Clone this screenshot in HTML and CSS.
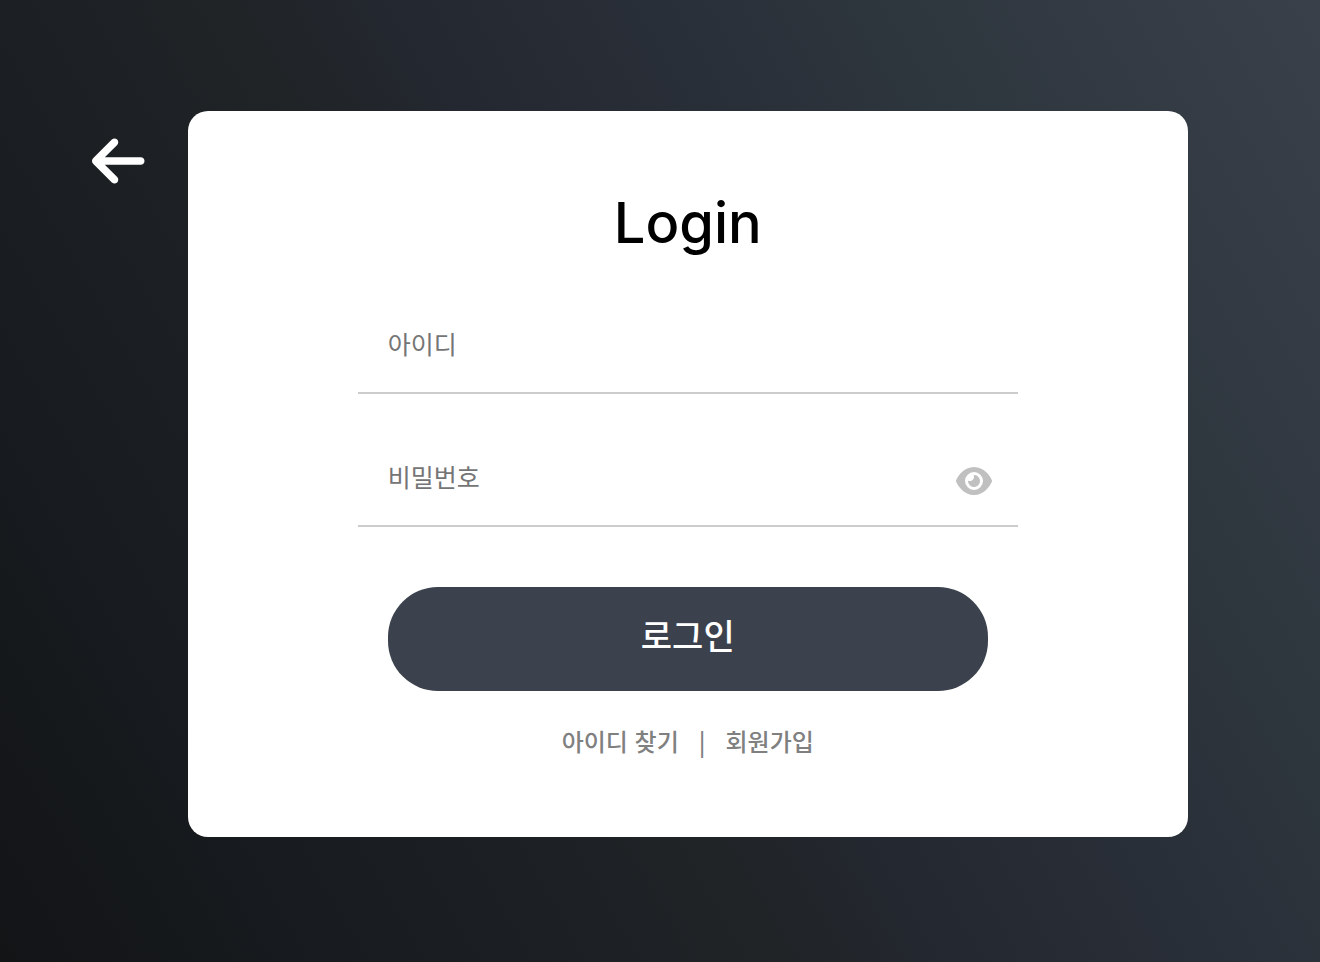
FILE: index.html
```html
<!DOCTYPE html>
<html lang="ko">
<head>
    <meta charset="UTF-8">
    <meta name="viewport" content="width=device-width, initial-scale=1.0">
    <title>Login</title>
    <link rel="stylesheet" href="styles.css">
</head>
<body>

    <div class="page">
        <!-- Back button -->
        <a href="#" class="back-link" aria-label="뒤로 가기">
            <svg class="back-icon" viewBox="0 0 448 512" aria-hidden="true">
                <path d="M9.4 233.4c-12.5 12.5-12.5 32.8 0 45.3l160 160c12.5 12.5 32.8 12.5 45.3 0s12.5-32.8 0-45.3L109.2 288 416 288c17.7 0 32-14.3 32-32s-14.3-32-32-32l-306.7 0L214.6 118.6c12.5-12.5 12.5-32.8 0-45.3s-32.8-12.5-45.3 0l-160 160z"/>
            </svg>
        </a>

        <!-- Login card -->
        <main class="login-container">
            <h1>Login</h1>
            <form class="login-form">
                <div class="input-box">
                    <input type="text" id="userId" placeholder="아이디" aria-label="아이디" required>
                </div>
                <div class="input-box">
                    <input type="password" id="userPw" placeholder="비밀번호" aria-label="비밀번호" required>
                    <button type="button" class="eye-button" aria-label="비밀번호 보기" onclick="togglePassword()">
                        <svg class="eye-icon" viewBox="0 0 576 512" aria-hidden="true">
                            <path d="M288 32c-80.8 0-145.5 36.8-192.6 80.6C48.6 156 17.3 208 2.5 243.7c-3.3 7.9-3.3 16.7 0 24.6C17.3 304 48.6 356 95.4 399.4C142.5 443.2 207.2 480 288 480s145.5-36.8 192.6-80.6c46.8-43.5 78.1-95.4 93-131.1c3.3-7.9 3.3-16.7 0-24.6c-14.9-35.7-46.2-87.7-93-131.1C433.5 68.8 368.8 32 288 32zM144 256a144 144 0 1 1 288 0 144 144 0 1 1 -288 0zm144-64c0 35.3-28.7 64-64 64c-7.1 0-13.9-1.2-20.3-3.3c-5.5-1.8-11.9 1.6-11.7 7.4c.3 6.9 1.3 13.8 3.2 20.7c13.7 51.2 66.4 81.6 117.6 67.9s81.6-66.4 67.9-117.6c-11.1-41.5-47.8-69.4-88.6-71.1c-5.8-.2-9.2 6.1-7.4 11.7c2.1 6.4 3.3 13.2 3.3 20.3z"/>
                        </svg>
                    </button>
                </div>
                <button type="submit" class="login-button">로그인</button>
            </form>
            <div class="links">
                <a href="#">아이디 찾기</a>
                <span>|</span>
                <a href="#">회원가입</a>
            </div>
        </main>
    </div>

    <script>
        function togglePassword() {
            const input = document.getElementById('userPw');
            input.type = input.type === 'password' ? 'text' : 'password';
        }
    </script>
</body>
</html>
```
FILE: styles.css
```css
* {
    box-sizing: border-box;
}

body {
    margin: 0;
    font-family: "Noto Sans CJK KR", sans-serif;
    background: linear-gradient(60deg, #121416, #191d21 22%, #202427 42%, #242831 52%, #2d353d 76%, #394049);
}

.page {
    min-height: 100vh;
    display: flex;
    justify-content: center;
    align-items: flex-start;
    gap: 43px;
    padding: 111px 132px 111px 92px;
}

.back-link {
    margin-top: 20px;
}

.back-icon {
    display: block;
    height: 60px;
    fill: white;
}

.login-container {
    flex: 1;
    max-width: 1000px;
    padding: 72px 0 78px;
    background-color: white;
    border-radius: 20px;
    text-align: center;
}

h1 {
    margin: 0 0 35px;
    font-family: Inter, sans-serif;
    font-size: 56px;
    font-weight: 500;
    line-height: 80px;
}

.login-form {
    display: flex;
    flex-direction: column;
    align-items: center;
}

.input-box {
    display: flex;
    align-items: center;
    width: 66%;
    height: 96px;
    margin-bottom: 37px;
    padding: 0 26px 0 30px;
    border-bottom: 2px solid #ccc;
}

.input-box input {
    flex: 1;
    min-width: 0;
    padding: 0 0 4px;
    border: none;
    outline: none;
    background: none;
    font-family: inherit;
    font-size: 25px;
}

.input-box input::placeholder {
    color: #757575;
}

.eye-button {
    padding: 6px 0 0;
    border: none;
    background: none;
    cursor: pointer;
}

.eye-icon {
    display: block;
    height: 32px;
    fill: #c0c0c0;
}

.login-button {
    width: 60%;
    height: 104px;
    margin-top: 23px;
    padding: 0 0 10px;
    border: none;
    border-radius: 50px;
    background-color: #3c424d;
    color: white;
    font-family: inherit;
    font-size: 34px;
    font-weight: 500;
    cursor: pointer;
}

.links {
    display: flex;
    justify-content: center;
    gap: 20px;
    margin-top: 32px;
    color: #808080;
    font-size: 24px;
    font-weight: 500;
    line-height: 36px;
}

.links a {
    color: inherit;
    text-decoration: none;
}
```
